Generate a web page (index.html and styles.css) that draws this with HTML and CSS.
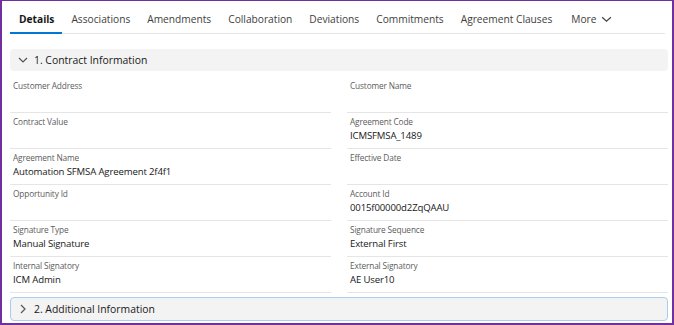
FILE: index.html
```html
<!doctype html>
<html lang="en">
    <head>
        <meta charset="UTF-8">
        <title>Agreement Details</title>
        <link rel="stylesheet" href="styles.css">
    </head>
    <body>
        <div class="frame">
            <nav class="tabs">
                <a class="tab active" href="#">Details</a>
                <a class="tab" href="#">Associations</a>
                <a class="tab" href="#">Amendments</a>
                <a class="tab" href="#">Collaboration</a>
                <a class="tab" href="#">Deviations</a>
                <a class="tab" href="#">Commitments</a>
                <a class="tab" href="#">Agreement Clauses</a>
                <a class="tab more" href="#">More
                    <svg class="more-icon" viewBox="0 0 12 8" width="11" height="7">
                        <path d="M1 1.5 L6 6 L11 1.5" fill="none" stroke="#444" stroke-width="1.4"/>
                    </svg>
                </a>
            </nav>

            <section class="section">
                <div class="section-head">
                    <svg class="chevron" viewBox="0 0 10 10" width="10" height="10">
                        <path d="M1 3 L5 7 L9 3" fill="none" stroke="#555" stroke-width="1.2"/>
                    </svg>
                    <span>1. Contract Information</span>
                </div>
                <div class="fields">
                    <div class="field">
                        <div class="field-label">Customer Address</div>
                        <div class="field-value"></div>
                    </div>
                    <div class="field">
                        <div class="field-label">Customer Name</div>
                        <div class="field-value"></div>
                    </div>
                    <div class="field">
                        <div class="field-label">Contract Value</div>
                        <div class="field-value"></div>
                    </div>
                    <div class="field">
                        <div class="field-label">Agreement Code</div>
                        <div class="field-value">ICMSFMSA_1489</div>
                    </div>
                    <div class="field">
                        <div class="field-label">Agreement Name</div>
                        <div class="field-value">Automation SFMSA Agreement 2f4f1</div>
                    </div>
                    <div class="field">
                        <div class="field-label">Effective Date</div>
                        <div class="field-value"></div>
                    </div>
                    <div class="field">
                        <div class="field-label">Opportunity Id</div>
                        <div class="field-value"></div>
                    </div>
                    <div class="field">
                        <div class="field-label">Account Id</div>
                        <div class="field-value">0015f00000d2ZqQAAU</div>
                    </div>
                    <div class="field">
                        <div class="field-label">Signature Type</div>
                        <div class="field-value">Manual Signature</div>
                    </div>
                    <div class="field">
                        <div class="field-label">Signature Sequence</div>
                        <div class="field-value">External First</div>
                    </div>
                    <div class="field">
                        <div class="field-label">Internal Signatory</div>
                        <div class="field-value">ICM Admin</div>
                    </div>
                    <div class="field">
                        <div class="field-label">External Signatory</div>
                        <div class="field-value">AE User10</div>
                    </div>
                </div>
            </section>

            <section class="section">
                <div class="section-head collapsed">
                    <svg class="chevron" viewBox="0 0 10 10" width="10" height="10">
                        <path d="M3 1 L7 5 L3 9" fill="none" stroke="#555" stroke-width="1.2"/>
                    </svg>
                    <span>2. Additional Information</span>
                </div>
            </section>
        </div>
    </body>
</html>
```

FILE: styles.css
```css
body {
    margin: 0;
    font-family: "Open Sans", "Noto Sans", sans-serif;
    color: #181818;
}

.frame {
    width: 674px;
    height: 325px;
    box-sizing: border-box;
    border: 2px solid #7030a0;
    border-top-width: 1px;
    padding: 0 4px 0 8px;
    background: #fff;
    overflow: hidden;
}

.tabs {
    display: flex;
    align-items: flex-end;
    border-bottom: 1px solid #e5e5e5;
    margin-right: 3px;
}

.tab {
    display: flex;
    align-items: center;
    padding: 10px 8px 5px 9px;
    margin-bottom: -1px;
    border-bottom: 2px solid transparent;
    font-size: 10.2px;
    line-height: 16px;
    color: #3e3e3c;
    text-decoration: none;
}

.tab.active {
    border-bottom-color: #0176d3;
    font-weight: 700;
    color: #181818;
}

.tab.more {
    margin-left: 2px;
}

.more-icon {
    margin-left: 4px;
}

.section-head {
    display: flex;
    align-items: center;
    height: 22px;
    margin-top: 15px;
    padding-left: 8px;
    box-sizing: border-box;
    background: #f3f3f3;
    border-radius: 4px;
    font-size: 10.4px;
    color: #181818;
}

.section-head .chevron {
    margin-right: 6px;
}

.section-head.collapsed {
    margin-top: 4px;
    height: 24px;
    border: 1px solid #a9cdf0;
    padding-left: 7px;
}

.fields {
    display: grid;
    grid-template-columns: 1fr 1fr;
    column-gap: 16px;
    align-items: start;
    margin-top: 6px;
}

.field {
    padding: 2px 0 4px 3px;
    border-bottom: 1px solid #e5e5e5;
}

.field-label {
    font-size: 8.3px;
    line-height: 13px;
    letter-spacing: -0.15px;
    color: #5c5c5c;
}

.field-value {
    min-height: 16px;
    font-size: 9.6px;
    line-height: 16px;
    letter-spacing: -0.15px;
}
```
